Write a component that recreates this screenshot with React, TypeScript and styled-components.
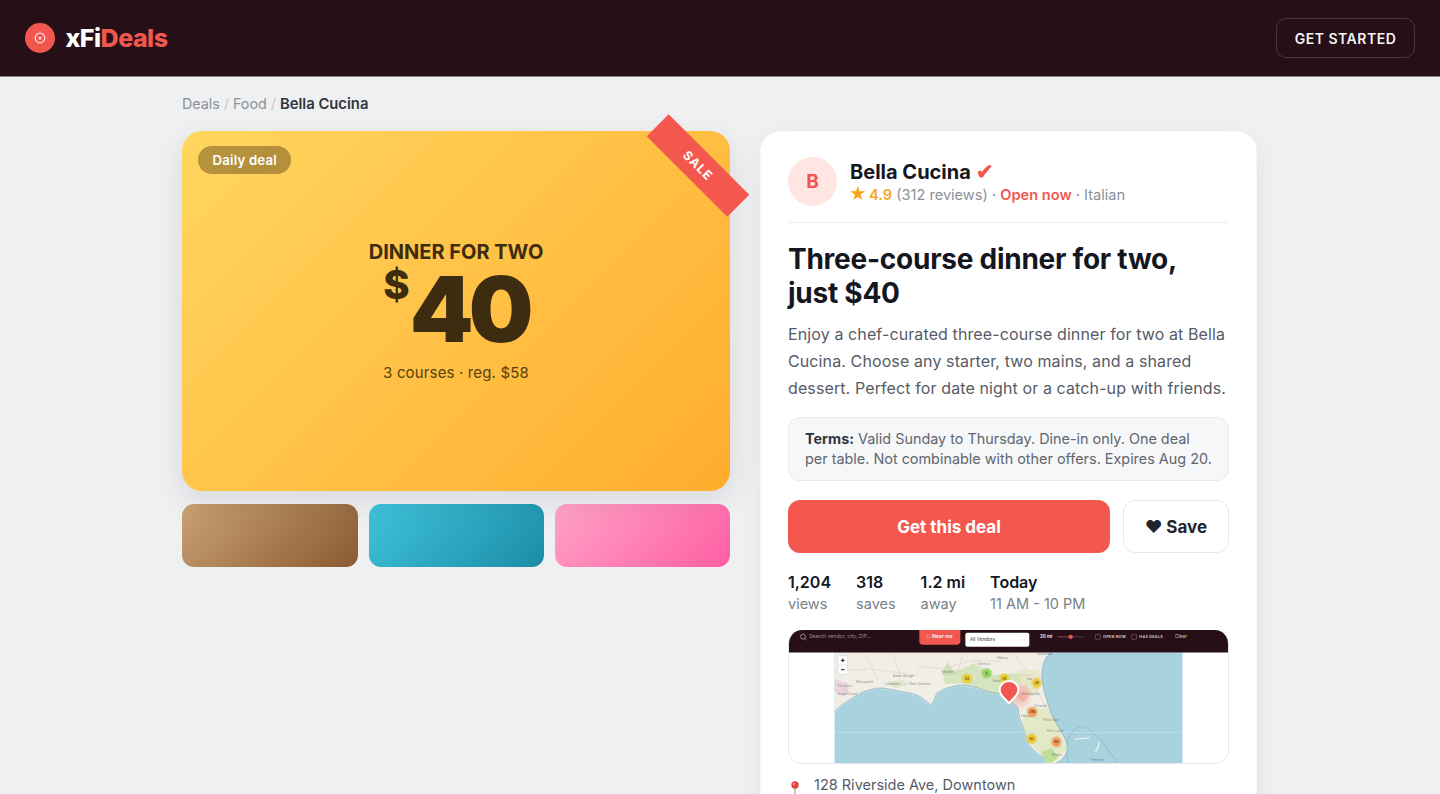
import React from "react";
import styled, { createGlobalStyle } from "styled-components";

const Global = createGlobalStyle`
  * { box-sizing: border-box; }
  html, body { margin: 0; padding: 0; background: #eff0f2; }
  body { font-family: Inter, "Liberation Sans", sans-serif; color: #14171f; -webkit-font-smoothing: antialiased; }
`;

const Nav = styled.header`
  height: 77px;
  background: #260f16;
  border-bottom: 1px solid #8d8386;
  display: flex;
  align-items: center;
  justify-content: space-between;
  padding: 0 25px;
`;
const Brand = styled.div`
  display: flex;
  align-items: center;
  gap: 11px;
`;
const LogoMark = styled.div`
  width: 30px;
  height: 30px;
  border-radius: 50%;
  background: #f2574f;
  display: flex;
  align-items: center;
  justify-content: center;
`;
const BrandName = styled.div`
  font-size: 25px;
  font-weight: 800;
  letter-spacing: -0.5px;
  color: #fff;
  margin-left: -0.5px;
  span { color: #f2574f; }
`;
const NavButton = styled.button`
  width: 139px;
  height: 40px;
  background: transparent;
  border: 1px solid rgba(255, 255, 255, 0.16);
  border-radius: 10px;
  color: #f4f2f2;
  font: 600 14px Inter, sans-serif;
  letter-spacing: 0.5px;
`;
const Wrap = styled.main`
  width: 1076px;
  margin: 0 auto;
  padding-top: 17px;
`;
const Crumbs = styled.nav`
  font-size: 14.300px;
  line-height: 20px;
  color: #8b9099;
  margin-bottom: 17px;
  i { font-style: normal; color: #c4c7cc; margin: 0 4px; }
  b { color: #30343d; font-weight: 600; font-size: 14.800px; }
`;
const Columns = styled.div`
  display: grid;
  grid-template-columns: 548px 497px;
  gap: 30px;
  align-items: start;
`;
const Hero = styled.div`
  position: relative;
  height: 360px;
  border-radius: 20px;
  background: linear-gradient(135deg, #ffd65f 0%, #ffad2d 100%);
  box-shadow: 0 10px 30px rgba(20, 23, 31, 0.1);
  display: flex;
  flex-direction: column;
  align-items: center;
  padding-top: 109px;
  color: #3d2c0f;
`;
const Pill = styled.span`
  position: absolute;
  left: 16px;
  top: 15px;
  height: 28px;
  padding: 0 14.500px;
  border-radius: 14px;
  background: rgba(60, 40, 10, 0.38);
  color: #fff;
  font-size: 13.200px;
  font-weight: 600;
  line-height: 28px;
  letter-spacing: 0.2px;
`;
const Ribbon = styled.span`
  position: absolute;
  top: 19px;
  right: -25px;
  width: 114px;
  height: 31px;
  background: #f3574e;
  color: #fff;
  font-size: 12.500px;
  font-weight: 700;
  letter-spacing: 1px;
  line-height: 31px;
  text-align: center;
  transform: rotate(45deg);
`;
const HeroKicker = styled.div`
  font-size: 20px;
  font-weight: 700;
  line-height: 24px;
`;
const HeroPrice = styled.div`
  font-size: 91px;
  font-weight: 900;
  line-height: 88px;
  letter-spacing: -4.800px;
  margin-top: 1px;
  display: flex;
  align-items: flex-start;
  sup { font-size: 40px; line-height: 40px; margin: 0; font-weight: 800; letter-spacing: 0; }
`;
const HeroNote = styled.div`
  font-size: 15px;
  line-height: 20px;
  margin-top: 10px;
  letter-spacing: 0.15px;
  color: #56410f;
`;
const Thumbs = styled.div`
  display: grid;
  grid-template-columns: 176px 175px 175px;
  gap: 11px;
  margin-top: 13px;
`;
const Thumb = styled.div<{ $from: string; $to: string }>`
  height: 63px;
  border-radius: 12px;
  background: linear-gradient(135deg, ${(p) => p.$from}, ${(p) => p.$to});
`;
const Card = styled.section`
  background: #fff;
  border-radius: 20px;
  border: 1px solid #f7f8f9;
  box-shadow: 0 8px 28px rgba(20, 23, 31, 0.06);
  padding: 25px 27px 40px;
`;
const Vendor = styled.div`
  display: flex;
  align-items: center;
  gap: 13px;
  padding-bottom: 16px;
  border-bottom: 1px solid #eceef0;
`;
const Avatar = styled.div`
  width: 49px;
  height: 49px;
  border-radius: 50%;
  background: #ffe6e3;
  color: #f2574f;
  font-size: 19px;
  font-weight: 700;
  display: flex;
  align-items: center;
  justify-content: center;
`;
const VendorName = styled.div`
  font-size: 20px;
  font-weight: 700;
  line-height: 26px;
  span { color: #f2574f; font-size: 21px; }
`;
const VendorMeta = styled.div`
  font-size: 14.600px;
  line-height: 20px;
  color: #8b9099;
  em { font-style: normal; color: #f5a623; font-weight: 600; }
  b { color: #f2574f; font-weight: 600; }
`;
const Star = styled.span`
  font-size: 17px;
  line-height: 14px;
  margin: 0 -1.500px 0 -1px;
`;
const Title = styled.h1`
  margin: 19px 0 0;
  font-size: 28px;
  line-height: 34px;
  font-weight: 700;
  letter-spacing: -0.25px;
`;
const Desc = styled.p`
  margin: 11px 0 0;
  font-size: 16px;
  line-height: 27px;
  letter-spacing: 0.11px;
  color: #565b66;
`;
const Terms = styled.div`
  margin-top: 15px;
  padding: 11px 16px;
  background: #f6f7f9;
  border: 1px solid #e8eaed;
  border-radius: 12px;
  font-size: 14.400px;
  line-height: 20px;
  color: #61666f;
  b { color: #30343d; font-weight: 700; }
`;
const Actions = styled.div`
  display: flex;
  gap: 13px;
  margin-top: 19px;
`;
const PrimaryBtn = styled.button`
  flex: 1;
  height: 53px;
  border: 0;
  border-radius: 12px;
  background: #f3574e;
  color: #fff;
  font: 700 17px Inter, sans-serif;
`;
const SaveBtn = styled.button`
  width: 106px;
  height: 53px;
  border: 1px solid #e6e8eb;
  border-radius: 12px;
  background: #fff;
  color: #20242c;
  font: 700 17px Inter, sans-serif;
`;
const Stats = styled.div`
  display: flex;
  gap: 25px;
  margin-top: 19px;
`;
const Stat = styled.div`
  font-size: 14.500px;
  line-height: 21px;
  color: #7a7f88;
  b { display: block; color: #14171f; font-size: 16px; font-weight: 600; }
`;
const MapFrame = styled.div`
  margin-top: 16px;
  height: 134px;
  border: 1px solid #e6e8eb;
  border-top: 0;
  border-radius: 14px;
  overflow: hidden;
  background: #fff;
  svg { display: block; width: 441px; height: 134px; margin-left: -1px; }
`;
const Address = styled.div`
  display: flex;
  align-items: center;
  gap: 12px;
  margin-top: 11px;
  font-size: 14.500px;
  line-height: 20px;
  color: #565b66;
`;

const clusters: [number, number, string, string][] = [
  [621, 176, "53", "#ecc933"],
  [680, 160, "2", "#8fd45f"],
  [733, 176, "24", "#ecc933"],
  [830, 189, "38", "#ecc933"],
  [817, 276, "290", "#f59a55"],
  [815, 356, "63", "#ecc933"],
  [889, 366, "102", "#f59a55"],
];
const labels: [number, number, string][] = [
  [398, 171, "Baton Rouge"],
  [288, 188, "Mosspoint"],
  [375, 196, "Lafayette"],
  [448, 194, "New Orleans"],
  [234, 202, "Houston"],
  [234, 224, "Sugar Land"],
  [546, 159, "Mobile"],
  [655, 134, "Dothan"],
  [710, 116, "Albany"],
  [830, 105, "Savannah"],
  [695, 185, "Tallah"],
  [800, 180, "Jax"],
  [785, 224, "Gainesville"],
  [822, 262, "Orlando"],
  [782, 290, "Tampa"],
  [850, 302, "Palm Bay"],
  [860, 336, "Port Lucie"],
  [875, 408, "Miami"],
  [990, 424, "Freeport"],
];

const COAST_W =
  "M223 275C240 258 270 236 309 216C330 208 350 204 369 204C395 208 425 216 450 219C470 224 490 232 510 255C522 250 524 232 531 219C550 204 585 196 609 195C635 196 650 202 669 210C685 216 700 218 711 219C730 222 760 244 774 264C776 285 782 305 789 321C795 340 798 355 804 369C815 388 835 402 849 411C852 420 854 428 856 433";
const COAST_E_TAIL = "C892 428 908 420 912 410C922 395 926 390 924 381C918 360 910 345 900 330C888 310 878 290 870 270C860 240 850 210 846 180C844 155 848 135 855 120C858 112 866 104 872 97";

const MapShot = () => (
  <svg viewBox="84 30 1323 402" fontFamily="Inter, sans-serif">
    <defs>
      <filter id="soft" x="-5%" y="-5%" width="110%" height="110%">
        <feGaussianBlur stdDeviation="1" />
      </filter>
      <filter id="glow" x="-50%" y="-50%" width="200%" height="200%">
        <feGaussianBlur stdDeviation="10" />
      </filter>
      <clipPath id="mapClip">
        <rect x="223" y="97" width="1045" height="336" />
      </clipPath>
    </defs>
    <g clipPath="url(#mapClip)">
      <rect x="223" y="97" width="1045" height="336" fill="#a9d2df" />
      <g filter="url(#soft)">
        <path d={COAST_W} fill="none" stroke="#c8e0e4" strokeWidth="7" />
        <path d={`${COAST_W}L880 433${COAST_E_TAIL}L223 97Z`} fill="#f1eee6" />
        <path
          d="M546 150L600 150L640 130L700 165L770 160L790 170L770 205L726 222L690 222L660 205L620 190L555 192Z"
          fill="#c4e0a6"
          opacity="0.6"
        />
        <path d="M770 150L835 150L845 190L825 230L790 225Z" fill="#e3e6c2" opacity="0.8" />
        <path d="M800 260L868 270L905 345L920 385L880 430L850 408L805 365L785 315Z" fill="#dde7b8" opacity="0.7" />
        <path d="M845 395L875 385L895 410L870 432L856 430Z" fill="#b6dd92" opacity="0.85" />
        <path d="M560 125L590 165L548 165Z" fill="#b7d69d" opacity="0.55" />
        <path d="M760 190L800 195L815 225L790 245L765 225Z" fill="#f0c7bb" opacity="0.7" />
        <path d="M225 178L262 190L268 222L233 225L223 210Z" fill="#e7cfd8" opacity="0.85" />
        <path d="M385 185L430 180L445 195L405 205Z" fill="#d8e5c3" opacity="0.8" />
        <path d={COAST_W} fill="none" stroke="#7ea7bd" strokeWidth="2" />
        <path d={`M880 433${COAST_E_TAIL}`} fill="none" stroke="#7ea7bd" strokeWidth="2" />
        <path
          d="M400 97L420 170M320 105L352 180M470 140L550 145M550 145L640 120L725 125M640 120L700 170M700 170L820 165M610 100L590 165M760 100L800 150M310 145L470 165M223 150L320 150M830 210L880 300"
          fill="none"
          stroke="#dcc8c4"
          strokeWidth="1.6"
        />
        <path
          d="M925 433C918 400 918 360 932 340C948 320 968 314 985 326C1010 342 1040 380 1076 433"
          fill="none"
          stroke="#8cb2c6"
          strokeWidth="2"
        />
        <path d="M945 358C962 352 972 360 988 352M1017 364C1020 376 1012 386 1006 396" fill="none" stroke="#f3f1ea" strokeWidth="3.5" />
      </g>
      <rect x="223" y="337" width="1045" height="1.5" fill="#cde4ec" />
      <g fontSize="10.500" fill="#5f5a56" fillOpacity="0.7">
        {labels.map(([x, y, t]) => (
          <text key={t} x={x} y={y}>
            {t}
          </text>
        ))}
      </g>
      <circle cx="780" cy="232" r="26" fill="#f2574f" opacity="0.3" filter="url(#glow)" />
      {clusters.map(([x, y, t, c]) => (
        <g key={t}>
          <circle cx={x} cy={y} r="17" fill={c} opacity="0.5" />
          <circle cx={x} cy={y} r="12.5" fill={c} />
          <text x={x} y={y + 3.5} fontSize="9.500" fontWeight="600" fill="#4b3d1a" textAnchor="middle">
            {t}
          </text>
        </g>
      ))}
      <rect x="234" y="107" width="29" height="56" rx="3" fill="#fff" stroke="#cfcfcf" strokeWidth="1.5" />
      <path d="M234 135H263" stroke="#ccc" strokeWidth="1.5" />
      <path d="M243 121H254M248.500 115.500V126.500M243 149H254" stroke="#222" strokeWidth="3" />
    </g>
    <path
      d="M747 250C735 235 719 226 719 210C719 194 732 183 747 183C762 183 775 194 775 210C775 226 759 235 747 250Z"
      fill="#f2574f"
      stroke="#fff"
      strokeWidth="6"
      strokeLinejoin="round"
    />
    <rect x="84" y="30" width="1323" height="67.500" fill="#260f16" />
    <circle cx="129" cy="50" r="7.500" fill="none" stroke="#cbc6c7" strokeWidth="2" />
    <path d="M135 56L140 61" stroke="#cbc6c7" strokeWidth="2" />
    <text x="147" y="55" fontSize="15.500" fill="#9a9193">
      Search vendor, city, ZIP...
    </text>
    <path d="M478 30H601V64Q601 74 591 74H488Q478 74 478 64Z" fill="#f2574f" />
    <circle cx="505" cy="50" r="5.500" fill="none" stroke="#f9b9b4" strokeWidth="1.500" />
    <text x="516" y="55" fontSize="15" fontWeight="700" fill="#fde5e3">
      Near me
    </text>
    <rect x="616" y="38" width="192" height="42" rx="6" fill="#fff" />
    <text x="630" y="63" fontSize="14" fill="#3a3a3a">
      All Vendors
    </text>
    <path d="M788 58L791 61L794 58" fill="none" stroke="#999" strokeWidth="1.500" />
    <text x="840" y="55" fontSize="13.500" fontWeight="700" fill="#efe9ea">
      20 mi
    </text>
    <path d="M893 50.500H972" stroke="#5c454c" strokeWidth="2.500" />
    <path d="M893 50.500H932" stroke="#7d3f42" strokeWidth="2.500" />
    <circle cx="932" cy="50.500" r="6.500" fill="#f2574f" />
    <rect x="1006" y="43" width="15" height="15" rx="2.500" fill="none" stroke="#8e8285" strokeWidth="1.500" />
    <text x="1029" y="54" fontSize="11" fontWeight="700" letterSpacing="1" fill="#cfc9ca">
      OPEN NOW
    </text>
    <rect x="1115" y="43" width="15" height="15" rx="2.500" fill="none" stroke="#8e8285" strokeWidth="1.500" />
    <text x="1138" y="54" fontSize="11" fontWeight="700" letterSpacing="1" fill="#cfc9ca">
      HAS DEALS
    </text>
    <text x="1245" y="55" fontSize="14.500" fill="#cfc9ca">
      Clear
    </text>
  </svg>
);

export default function App() {
  return (
    <>
      <Global />
      <Nav>
        <Brand>
          <LogoMark>
            <svg width="14" height="14" viewBox="0 0 14 14" fill="none">
              <circle cx="7" cy="7" r="4.800" stroke="#ffd9d6" strokeWidth="1.300" />
              <circle cx="7" cy="7" r="1.500" fill="#ffd9d6" />
            </svg>
          </LogoMark>
          <BrandName>
            xFi<span>Deals</span>
          </BrandName>
        </Brand>
        <NavButton>GET STARTED</NavButton>
      </Nav>
      <Wrap>
        <Crumbs>
          Deals<i>/</i>Food<i>/</i>
          <b>Bella Cucina</b>
        </Crumbs>
        <Columns>
          <div>
            <Hero>
              <Pill>Daily deal</Pill>
              <Ribbon>SALE</Ribbon>
              <HeroKicker>DINNER FOR TWO</HeroKicker>
              <HeroPrice>
                <sup>$</sup>40
              </HeroPrice>
              <HeroNote>3 courses · reg. $58</HeroNote>
            </Hero>
            <Thumbs>
              <Thumb $from="#c9a274" $to="#8a5a30" />
              <Thumb $from="#40c4db" $to="#1b8ca6" />
              <Thumb $from="#ffa3c7" $to="#ff5ea3" />
            </Thumbs>
          </div>
          <Card>
            <Vendor>
              <Avatar>B</Avatar>
              <div>
                <VendorName>
                  Bella Cucina <span>✔</span>
                </VendorName>
                <VendorMeta>
                  <em>
                    <Star>★</Star> 4.9
                  </em>{" "}
                  (312 reviews) · <b>Open now</b> · Italian
                </VendorMeta>
              </div>
            </Vendor>
            <Title>
              Three-course dinner for two,
              <br />
              just $40
            </Title>
            <Desc>
              Enjoy a chef-curated three-course dinner for two at Bella Cucina. Choose any starter, two mains, and a
              shared dessert. Perfect for date night or a catch-up with friends.
            </Desc>
            <Terms>
              <b>Terms:</b> Valid Sunday to Thursday. Dine-in only. One deal per table. Not combinable with other
              offers. Expires Aug 20.
            </Terms>
            <Actions>
              <PrimaryBtn>Get this deal</PrimaryBtn>
              <SaveBtn>❤ Save</SaveBtn>
            </Actions>
            <Stats>
              <Stat>
                <b>1,204</b>views
              </Stat>
              <Stat>
                <b>318</b>saves
              </Stat>
              <Stat>
                <b>1.2 mi</b>away
              </Stat>
              <Stat>
                <b>Today</b>11 AM - 10 PM
              </Stat>
            </Stats>
            <MapFrame>
              <MapShot />
            </MapFrame>
            <Address>
              <svg width="14" height="20" viewBox="0 0 14 20">
                <path d="M7 11V20" stroke="#a8a8a8" strokeWidth="1.300" />
                <circle cx="7" cy="10" r="3.700" fill="#e5443f" />
                <circle cx="6" cy="9" r="1" fill="#f9b3ae" />
              </svg>
              128 Riverside Ave, Downtown
            </Address>
          </Card>
        </Columns>
      </Wrap>
    </>
  );
}
